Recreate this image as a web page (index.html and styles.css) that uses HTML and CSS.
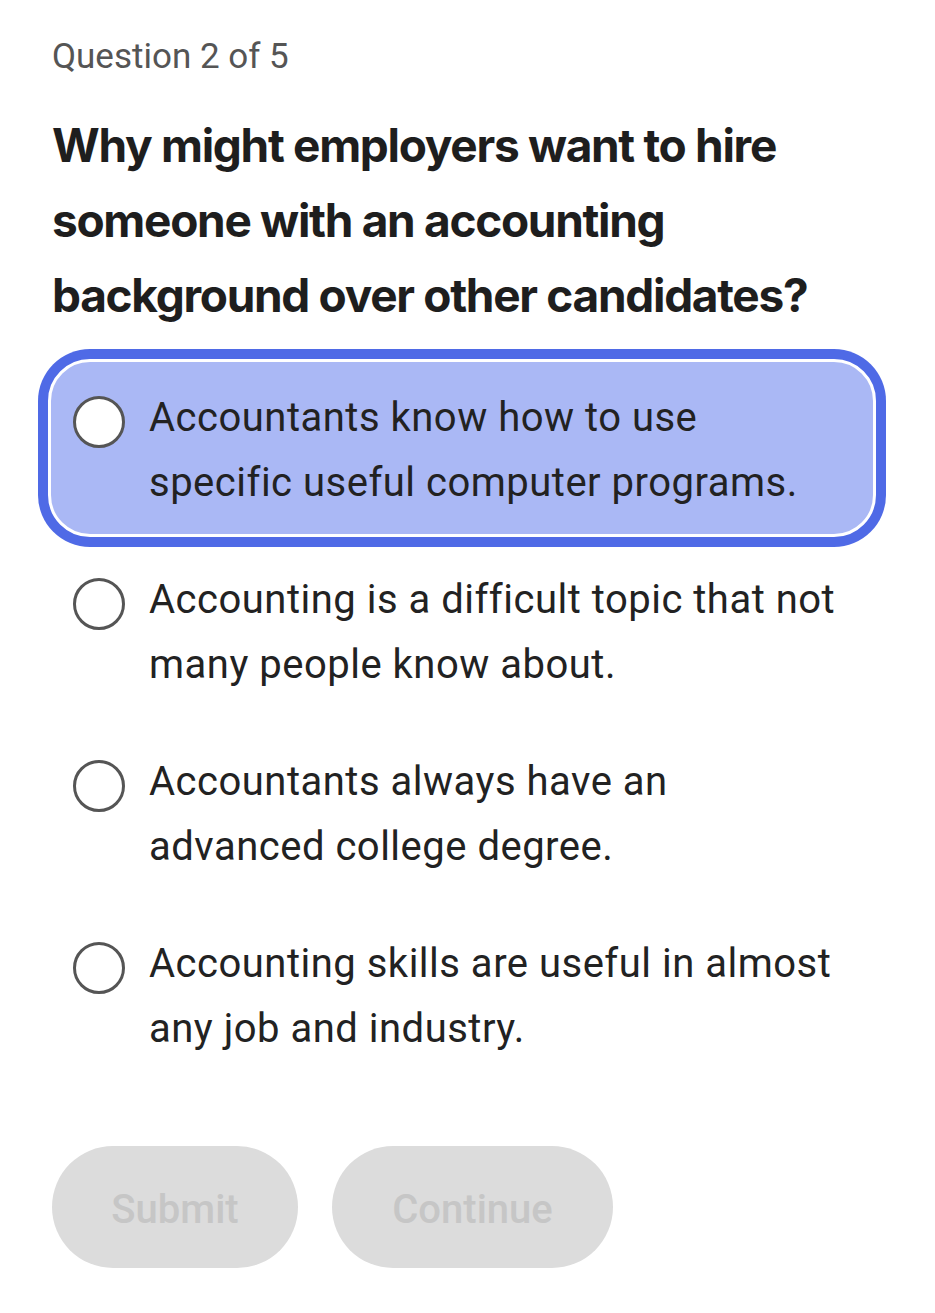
FILE: index.html
```html
<!DOCTYPE html>
<html lang="en">
<head>
<meta charset="utf-8">
<title>Quiz</title>
<link rel="stylesheet" href="styles.css">
</head>
<body>
<main class="quiz">
  <p class="counter">Question 2 of 5</p>
  <h1 class="question">Why might employers want to hire someone with an accounting background over other candidates?</h1>
  <ul class="options">
    <li class="option selected"><span class="radio"></span><span class="label">Accountants know how to use specific useful computer programs.</span></li>
    <li class="option"><span class="radio"></span><span class="label">Accounting is a difficult topic that not many people know about.</span></li>
    <li class="option"><span class="radio"></span><span class="label">Accountants always have an advanced college degree.</span></li>
    <li class="option"><span class="radio"></span><span class="label">Accounting skills are useful in almost any job and industry.</span></li>
  </ul>
  <div class="actions">
    <button class="btn btn-submit" disabled>Submit</button>
    <button class="btn btn-continue" disabled>Continue</button>
  </div>
</main>
</body>
</html>
```
FILE: styles.css
```css
* { box-sizing: border-box; }
html, body { margin: 0; padding: 0; background: #fff; }
body { font-family: Roboto, "Liberation Sans", sans-serif; color: #222; }

.quiz { padding: 32px 59px 0 48px; }

.counter {
  margin: 0 0 0 4px;
  font-family: Roboto, sans-serif;
  font-size: 35px;
  line-height: 50px;
  color: #555;
}

.question {
  margin: 26px 0 26px 4px;
  font-family: Inter, Roboto, sans-serif;
  font-weight: 700;
  font-size: 46px;
  letter-spacing: -1.3px;
  line-height: 75px;
  color: #1e1e1e;
}

.options { list-style: none; margin: 0; padding: 0; display: flex; flex-direction: column; gap: 4px; }

.option {
  display: flex;
  align-items: flex-start;
  gap: 24px;
  padding: 23px 34px 19px 22px;
  border: 3px solid transparent;
  border-radius: 42px;
  font-size: 40px;
  letter-spacing: 0.5px;
  line-height: 65px;
  color: #222;
}

.option.selected {
  background: #aab8f5;
  border-color: #fff;
  box-shadow: 0 0 0 10px #4f6ae6;
}

.radio {
  flex: 0 0 52px;
  width: 52px;
  height: 52px;
  margin-top: 11px;
  border: 3px solid #555;
  border-radius: 50%;
  background: #fff;
}

.actions { display: flex; gap: 34px; margin-top: 63px; margin-left: 4px; }

.btn {
  height: 122px;
  border: 0;
  border-radius: 61px;
  background: #dcdcdc;
  color: #c6c6c6;
  font-family: Roboto, sans-serif;
  font-weight: 500;
  font-size: 40px;
  padding: 4px 0 0;
}
.btn-submit { width: 246px; }
.btn-continue { width: 281px; }
```
